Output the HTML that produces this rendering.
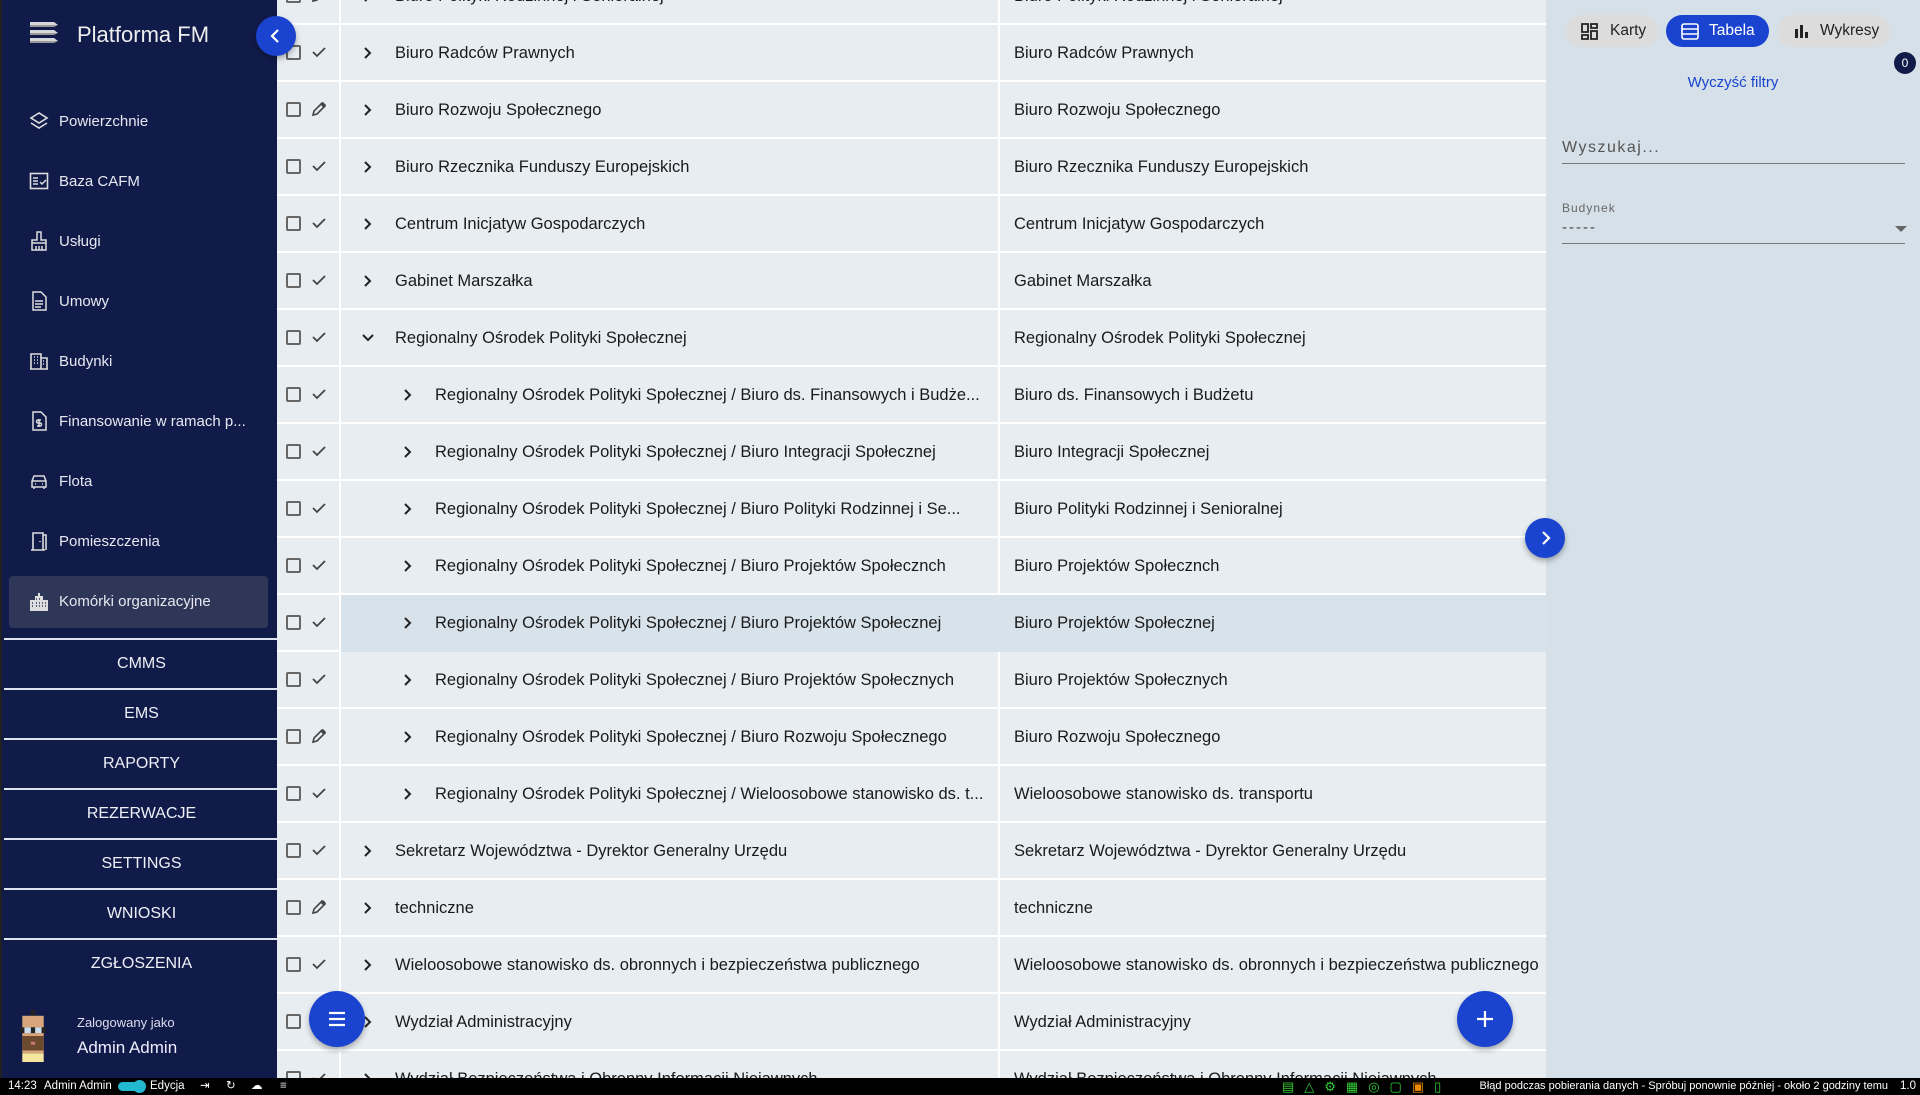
<!DOCTYPE html>
<html><head><meta charset="utf-8"><style>
*{box-sizing:border-box;margin:0;padding:0}
body{width:1920px;height:1095px;overflow:hidden;position:relative;font-family:"Liberation Sans",sans-serif;background:#e8edf1}
.sb{position:absolute;left:0;top:0;width:277px;height:1078px;background:#111b4a;border-left:2px solid #222;color:#e8eaf0}
.nav{position:absolute;left:57px;font-size:15px;color:#e6e8f0}
.ico{position:absolute;left:27px;width:20px;height:20px}
.sec{position:absolute;left:2px;width:275px;height:50px;border-top:2px solid #dfe3ee;text-align:center;line-height:48px;font-size:16px;color:#eef0f6}
.tbl{position:absolute;left:277px;top:0;width:1269px;height:1078px;background:#e8edf1;overflow:hidden}
.row{position:absolute;left:0;width:1269px;height:57px;border-bottom:2px solid #fff}
.row .t1{position:absolute;left:118px;top:19px;font-size:16.5px;color:#1a1a1a;white-space:nowrap}
.row .t2{position:absolute;left:737px;top:19px;font-size:16.5px;color:#1a1a1a;white-space:nowrap;width:532px;overflow:hidden}
.row .cb{position:absolute;left:9px;top:20px;width:15px;height:15px;border:2px solid #666;border-radius:2px}
.row .ic{position:absolute;left:33px;top:18px}
.row .ch{position:absolute;left:83px;top:20px}
.vl{position:absolute;top:0;width:2px;height:1078px;background:#fff}
.rp{position:absolute;left:1546px;top:0;width:374px;height:1078px;background:#d5e0e8}
.pill{position:absolute;top:15px;height:32px;border-radius:16px;background:#dcdcdc;font-size:15.5px;color:#222;line-height:32px}
.fab{position:absolute;z-index:5;border-radius:50%;background:#1a44cf;box-shadow:0 3px 6px rgba(0,0,0,.3)}
.stat{position:absolute;z-index:6;left:0;top:1078px;width:1920px;height:17px;background:#000;color:#fff;font-size:11.5px;line-height:17px}
</style></head><body>
<div class="sb">
 <svg style="position:absolute;left:26px;top:20px" width="32" height="25" viewBox="0 0 32 25"><path d="M2 2h24l4 3H2z M2 10h24l4 3H2z M2 18h24l4 3H2z" fill="#d8d8dc"/><path d="M2 5h28l-4 2H2z M2 13h28l-4 2H2z M2 21h28l-4 2H2z" fill="#999"/></svg>
 <div style="position:absolute;left:75px;top:22px;font-size:22px;color:#eee">Platforma FM</div>
 <svg class="ico" style="top:111px" viewBox="0 0 20 20"><path d="M10 2L2 7l8 5 8-5z M2 12l8 5 8-5" fill="none" stroke="#ddd" stroke-width="1.6"/></svg><div class="nav" style="top:113px">Powierzchnie</div>
 <svg class="ico" style="top:171px" viewBox="0 0 20 20"><rect x="1.5" y="2.5" width="17" height="15" fill="none" stroke="#ddd" stroke-width="1.6"/><path d="M4 7h5M4 10h5M4 13h5M11 11l2 2 4-4" stroke="#ddd" stroke-width="1.5" fill="none"/></svg><div class="nav" style="top:173px">Baza CAFM</div>
 <svg class="ico" style="top:231px" viewBox="0 0 20 20"><path d="M8 1h4v8h5v3H3V9h5z M3 12v7h14v-7 M7 15v4M10 15v4M13 15v4" fill="none" stroke="#ddd" stroke-width="1.5"/></svg><div class="nav" style="top:233px">Usługi</div>
 <svg class="ico" style="top:291px" viewBox="0 0 20 20"><path d="M4 1h8l5 5v13H4z M6 10h8M6 13h8M6 16h6" fill="none" stroke="#ddd" stroke-width="1.5"/></svg><div class="nav" style="top:293px">Umowy</div>
 <svg class="ico" style="top:351px" viewBox="0 0 20 20"><path d="M2 18V3h10v15 M12 7h6v11 M1 18h18 M5 6h1M8 6h1M5 9h1M8 9h1M5 12h1M8 12h1M14 10h1M14 13h1" fill="none" stroke="#ddd" stroke-width="1.6"/></svg><div class="nav" style="top:353px">Budynki</div>
 <svg class="ico" style="top:411px" viewBox="0 0 20 20"><path d="M4 1h8l5 5v13H4z M10 8v8 M12 9h-3a1.5 1.5 0 000 3h2a1.5 1.5 0 010 3H8" fill="none" stroke="#ddd" stroke-width="1.5"/></svg><div class="nav" style="top:413px">Finansowanie w ramach p...</div>
 <svg class="ico" style="top:471px" viewBox="0 0 20 20"><path d="M3 10l2-5h10l2 5v6H3z M3 10h14 M5 16v2M15 16v2 M6 13h1M13 13h1" fill="none" stroke="#ddd" stroke-width="1.5"/></svg><div class="nav" style="top:473px">Flota</div>
 <svg class="ico" style="top:531px" viewBox="0 0 20 20"><path d="M4 19V2h10v17 M2 19h14 M11 10v1 M14 4h3v15" fill="none" stroke="#ddd" stroke-width="1.6"/></svg><div class="nav" style="top:533px">Pomieszczenia</div>
 <div style="position:absolute;left:7px;top:576px;width:259px;height:52px;background:#2f3758;border-radius:4px"></div>
 <svg class="ico" style="top:592px" viewBox="0 0 20 20"><path d="M1 19V8h5V4h3V1h2v3h3v4h5v11z" fill="#ddd"/><path d="M3 11h1M3 14h1M7 7h1M7 11h1M7 14h1M10 7h1M10 11h1M10 14h1M13 11h1M13 14h1M16 11h1M16 14h1" stroke="#2f3758" stroke-width="1.5"/></svg><div class="nav" style="top:593px">Komórki organizacyjne</div>
 <div class="sec" style="top:638px">CMMS</div>
 <div class="sec" style="top:688px">EMS</div>
 <div class="sec" style="top:738px">RAPORTY</div>
 <div class="sec" style="top:788px">REZERWACJE</div>
 <div class="sec" style="top:838px">SETTINGS</div>
 <div class="sec" style="top:888px">WNIOSKI</div>
 <div class="sec" style="top:938px">ZGŁOSZENIA</div>
 <svg style="position:absolute;left:16px;top:1010px" width="30" height="52" viewBox="0 0 14 18" preserveAspectRatio="none"><rect x="6" y="0" width="2" height="2" fill="#222"/><rect x="2" y="2" width="10" height="13" fill="#d9a57a"/><rect x="1" y="6" width="12" height="2" fill="#222"/><rect x="3" y="6" width="3" height="2" fill="#cde"/><rect x="8" y="6" width="3" height="2" fill="#cde"/><rect x="2" y="9" width="10" height="5" fill="#6b4a2e"/><rect x="6" y="11" width="2" height="1" fill="#c77"/><rect x="2" y="15" width="10" height="3" fill="#f5e6a0"/></svg>
 <div style="position:absolute;left:75px;top:1015px;font-size:13px;color:#dde">Zalogowany jako</div>
 <div style="position:absolute;left:75px;top:1038px;font-size:17px;color:#eef">Admin Admin</div>
</div>
<div class="fab" style="left:256px;top:16px;width:40px;height:40px"><svg width="40" height="40"><path d="M22 14l-6 6 6 6" stroke="#fff" stroke-width="2.2" fill="none"/></svg></div>

<div class="tbl">
<div class="vl" style="left:62px"></div><div class="vl" style="left:721px"></div>
<div id="rows"></div>
</div>
<div class="rp">
 <div class="pill" style="left:20px;width:92px"><svg style="position:absolute;left:15px;top:8px" width="17" height="17" viewBox="0 0 17 17"><path d="M1 1h6v8H1zM10 1h6v4h-6zM10 8h6v8h-6zM1 12h6v4H1z" fill="none" stroke="#222" stroke-width="1.8"/></svg><span style="position:absolute;left:44px">Karty</span></div>
 <div class="pill" style="left:120px;width:103px;background:#1a44cf;color:#fff"><svg style="position:absolute;left:15px;top:8px" width="18" height="17" viewBox="0 0 18 17"><rect x="1" y="1" width="16" height="15" rx="2" fill="none" stroke="#fff" stroke-width="1.6"/><path d="M1 6h16M1 11h16" stroke="#fff" stroke-width="1.6"/></svg><span style="position:absolute;left:43px">Tabela</span></div>
 <div class="pill" style="left:231px;width:113px"><svg style="position:absolute;left:17px;top:10px" width="14" height="13"><path d="M1 4h3v9H1zM6 0h3v13H6zM11 7h3v6h-3z" fill="#222"/></svg><span style="position:absolute;left:43px">Wykresy</span></div>
 <div style="position:absolute;left:348px;top:52px;width:22px;height:22px;border-radius:50%;background:#111b4a;color:#fff;font-size:12px;text-align:center;line-height:22px">0</div>
 <div style="position:absolute;left:0;width:374px;top:74px;text-align:center;font-size:15px;color:#1a44cf">Wyczyść filtry</div>
 <div style="position:absolute;left:16px;top:139px;font-size:16px;color:#555;letter-spacing:1.5px">Wyszukaj...</div>
 <div style="position:absolute;left:16px;top:163px;width:343px;height:1px;background:#777"></div>
 <div style="position:absolute;left:16px;top:201px;font-size:12px;color:#666;letter-spacing:1px">Budynek</div>
 <div style="position:absolute;left:16px;top:219px;font-size:15px;color:#444;letter-spacing:2px">-----</div>
 <svg style="position:absolute;left:349px;top:226px" width="12" height="7"><path d="M0 0h12L6 6z" fill="#666"/></svg>
 <div style="position:absolute;left:16px;top:243px;width:343px;height:1px;background:#777"></div>
</div>
<div class="fab" style="left:1525px;top:518px;width:40px;height:40px"><svg width="40" height="40"><path d="M18 14l6 6-6 6" stroke="#fff" stroke-width="2.2" fill="none"/></svg></div>
<div class="fab" style="left:309px;top:991px;width:56px;height:56px"><svg width="56" height="56"><path d="M20 22h16M20 28h16M20 34h16" stroke="#fff" stroke-width="2.2"/></svg></div>
<div class="fab" style="left:1457px;top:991px;width:56px;height:56px"><svg width="56" height="56"><path d="M28 20v16M20 28h16" stroke="#fff" stroke-width="2.2"/></svg></div>
<div class="stat">
 <span style="position:absolute;left:8px">14:23</span><span style="position:absolute;left:44px">Admin Admin</span>
 <div style="position:absolute;left:118px;top:4px;width:22px;height:9px;border-radius:5px;background:#22b8d0"></div><div style="position:absolute;left:133px;top:2px;width:13px;height:13px;border-radius:50%;background:#22b8d0"></div>
 <span style="position:absolute;left:150px">Edycja</span>
 <span style="position:absolute;left:200px">⇥</span><span style="position:absolute;left:226px">↻</span><span style="position:absolute;left:251px">☁</span><span style="position:absolute;left:280px">≡</span>
 <div style="position:absolute;left:1282px;top:0;color:#3c3;font-size:13px;letter-spacing:10px">▤△⚙▦◎▢<span style="color:#e80">▣</span>▯</div>
 <span style="position:absolute;right:32px;font-size:11px">Błąd podczas pobierania danych - Spróbuj ponownie później - około 2 godziny temu</span><span style="position:absolute;left:1900px">1.0</span>
</div>
<script>
var rows=[
["Biuro Polityki Rodzinnej i Senioralnej","Biuro Polityki Rodzinnej i Senioralnej",0,"p"],
["Biuro Radców Prawnych","Biuro Radców Prawnych",0,"c"],
["Biuro Rozwoju Społecznego","Biuro Rozwoju Społecznego",0,"p"],
["Biuro Rzecznika Funduszy Europejskich","Biuro Rzecznika Funduszy Europejskich",0,"c"],
["Centrum Inicjatyw Gospodarczych","Centrum Inicjatyw Gospodarczych",0,"c"],
["Gabinet Marszałka","Gabinet Marszałka",0,"c"],
["Regionalny Ośrodek Polityki Społecznej","Regionalny Ośrodek Polityki Społecznej",2,"c"],
["Regionalny Ośrodek Polityki Społecznej / Biuro ds. Finansowych i Budże...","Biuro ds. Finansowych i Budżetu",1,"c"],
["Regionalny Ośrodek Polityki Społecznej / Biuro Integracji Społecznej","Biuro Integracji Społecznej",1,"c"],
["Regionalny Ośrodek Polityki Społecznej / Biuro Polityki Rodzinnej i Se...","Biuro Polityki Rodzinnej i Senioralnej",1,"c"],
["Regionalny Ośrodek Polityki Społecznej / Biuro Projektów Społecznch","Biuro Projektów Społecznch",1,"c"],
["Regionalny Ośrodek Polityki Społecznej / Biuro Projektów Społecznej","Biuro Projektów Społecznej",1,"c",1],
["Regionalny Ośrodek Polityki Społecznej / Biuro Projektów Społecznych","Biuro Projektów Społecznych",1,"c"],
["Regionalny Ośrodek Polityki Społecznej / Biuro Rozwoju Społecznego","Biuro Rozwoju Społecznego",1,"p"],
["Regionalny Ośrodek Polityki Społecznej / Wieloosobowe stanowisko ds. t...","Wieloosobowe stanowisko ds. transportu",1,"c"],
["Sekretarz Województwa - Dyrektor Generalny Urzędu","Sekretarz Województwa - Dyrektor Generalny Urzędu",0,"c"],
["techniczne","techniczne",0,"p"],
["Wieloosobowe stanowisko ds. obronnych i bezpieczeństwa publicznego","Wieloosobowe stanowisko ds. obronnych i bezpieczeństwa publicznego",0,"c"],
["Wydział Administracyjny","Wydział Administracyjny",0,"c"],
["Wydział Bezpieczeństwa i Obronny Informacji Niejawnych","Wydział Bezpieczeństwa i Obronny Informacji Niejawnych",0,"c"]];
var h="";
rows.forEach(function(r,i){
 var top=-32+i*57, nest=r[2]==1, off=nest?40:0;
 var ic=r[3]=="c"?'<svg class="ic" width="18" height="18"><path d="M3 9l4 4 8-8" stroke="#444" stroke-width="1.8" fill="none"/></svg>':'<svg class="ic" width="18" height="18"><path d="M3 15l1-4 8-8 3 3-8 8z M11 4l3 3" stroke="#444" stroke-width="1.6" fill="none"/><path d="M12 3l3 3 1-1-3-3z" fill="#444"/></svg>';
 var ch=r[2]==2?'<svg class="ch" style="left:83px" width="16" height="16"><path d="M3 5l5 5 5-5" stroke="#222" stroke-width="2" fill="none"/></svg>':'<svg class="ch" style="left:'+(83+off)+'px" width="16" height="16"><path d="M5 3l5 5-5 5" stroke="#222" stroke-width="2" fill="none"/></svg>';
 var bg=r[4]?'<div style="position:absolute;left:64px;top:0;width:1205px;height:57px;background:#d8e2ea"></div>':'';
 h+='<div class="row" style="top:'+top+'px">'+bg+'<div class="cb"></div>'+ic+ch+'<div class="t1" style="left:'+(118+off)+'px">'+r[0]+'</div><div class="t2">'+r[1]+'</div></div>';
});
document.getElementById('rows').innerHTML=h;
</script>
</body></html>
